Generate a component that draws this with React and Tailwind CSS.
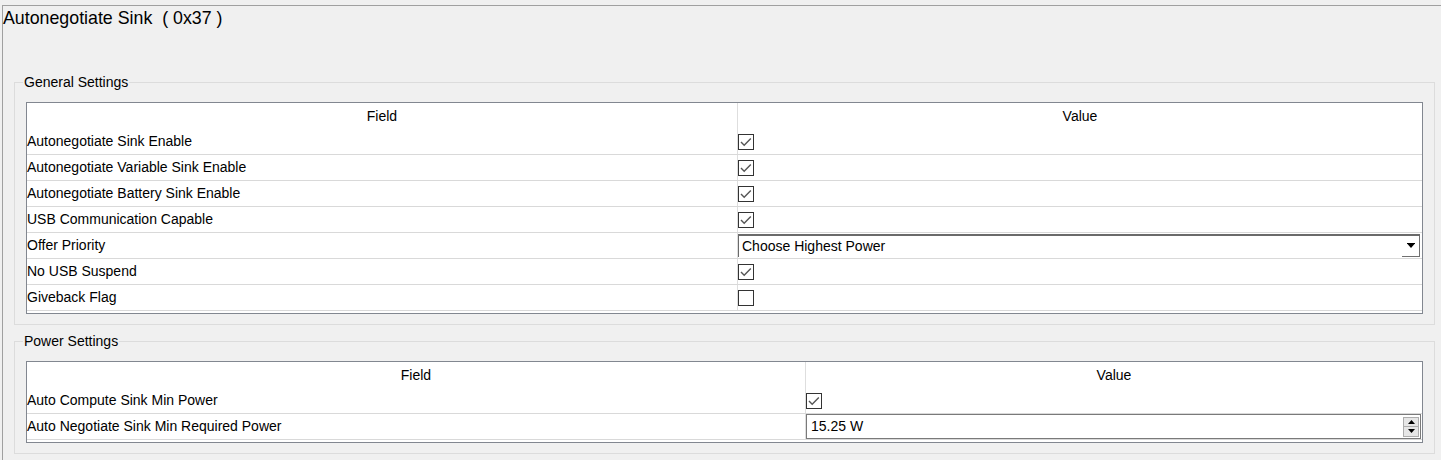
import React from 'react';

const font = { fontFamily: '"Liberation Sans", Arial, sans-serif' };

const Check = ({ checked }) => (
  <svg width="16" height="16" viewBox="0 0 16 16" className="block">
    <rect x="0.5" y="0.5" width="15" height="15" fill="#fff" stroke="#333" />
    {checked && (
      <polyline points="3,8 6.2,11.3 12.8,4.6" fill="none" stroke="#555" strokeWidth="1.4" />
    )}
  </svg>
);

const Dropdown = ({ value }) => (
  <div className="flex h-[23px] w-[682px] border-t-2 border-l border-[#6a6a6a] bg-white">
    <div className="flex-1 pl-[3px] flex items-center text-[14px] text-black">{value}</div>
    <div className="w-[18px] flex items-center justify-center border-r border-b border-[#707070]">
      <svg width="8" height="6" viewBox="0 0 8 6">
        <rect x="0" y="0" width="8" height="1" fill="#000" />
        <polygon points="0.5,1 7.5,1 4,5" fill="#000" />
      </svg>
    </div>
  </div>
);

const Spin = ({ value }) => (
  <div className="flex h-[25px] w-[615px] border border-[#7a7a7a] bg-white">
    <div className="flex-1 pl-[4px] flex items-center text-[14px] text-black">{value}</div>
    <div className="w-[16px] mr-[1px] flex flex-col justify-center">
      <div className="h-[10px] border border-[#adadad] bg-[#e6e6e6] flex items-center justify-center">
        <svg width="7" height="4" viewBox="0 0 7 4"><polygon points="0,4 7,4 3.5,0" fill="#000" /></svg>
      </div>
      <div className="h-[10px] border border-[#adadad] border-t-0 bg-[#e6e6e6] flex items-center justify-center">
        <svg width="7" height="4" viewBox="0 0 7 4"><polygon points="0,0 7,0 3.5,4" fill="#000" /></svg>
      </div>
    </div>
  </div>
);

const Group = ({ title, children, className = '' }) => (
  <div className={`relative w-[1421px] border border-[#dcdcdc] pt-[19px] pl-[11px] pr-[11px] pb-[10px] ${className}`}>
    <div className="absolute -top-[9px] left-[8px] px-[1px] bg-[#f0f0f0] text-[14px] leading-[16px] text-black">
      {title}
    </div>
    {children}
  </div>
);

const Table = ({ col1, col2, rows }) => (
  <div className="w-[1397px] border border-[#828790] bg-white">
    <div className="flex h-[26px]">
      <div style={{ width: col1 }} className="border-r border-[#dedede] flex items-center justify-center text-[14px] text-black">Field</div>
      <div style={{ width: col2 }} className="flex items-center justify-center text-[14px] text-black">Value</div>
    </div>
    {rows.map((r) => (
      <div key={r.label} className="flex h-[26px] border-b border-[#d9d9d9]">
        <div style={{ width: col1 }} className="border-r border-[#dedede] flex items-center text-[14px] text-black">{r.label}</div>
        <div style={{ width: col2 }} className="flex items-center">
          {r.type === 'check' && <Check checked={r.value} />}
          {r.type === 'select' && <Dropdown value={r.value} />}
          {r.type === 'spin' && <Spin value={r.value} />}
        </div>
      </div>
    ))}
    <div className="h-[2px]" />
  </div>
);

const general = [
  { label: 'Autonegotiate Sink Enable', type: 'check', value: true },
  { label: 'Autonegotiate Variable Sink Enable', type: 'check', value: true },
  { label: 'Autonegotiate Battery Sink Enable', type: 'check', value: true },
  { label: 'USB Communication Capable', type: 'check', value: true },
  { label: 'Offer Priority', type: 'select', value: 'Choose Highest Power' },
  { label: 'No USB Suspend', type: 'check', value: true },
  { label: 'Giveback Flag', type: 'check', value: false },
];

const power = [
  { label: 'Auto Compute Sink Min Power', type: 'check', value: true },
  { label: 'Auto Negotiate Sink Min Required Power', type: 'spin', value: '15.25 W' },
];

export default function App() {
  return (
    <div style={font} className="w-[1441px] h-[460px] bg-[#f0f0f0] overflow-hidden">
      <div className="ml-[2px] mt-[5px] h-[455px] border-l border-t border-[#a0a0a0]">
        <div className="h-[24px] leading-[24px] text-[17.8px] text-black whitespace-pre">Autonegotiate Sink  ( 0x37 )</div>
        <div className="ml-[11px] mt-[52px]">
          <Group title="General Settings">
            <Table col1={711} col2={684} rows={general} />
          </Group>
          <Group title="Power Settings" className="mt-[16px]">
            <Table col1={779} col2={616} rows={power} />
          </Group>
        </div>
      </div>
    </div>
  );
}
